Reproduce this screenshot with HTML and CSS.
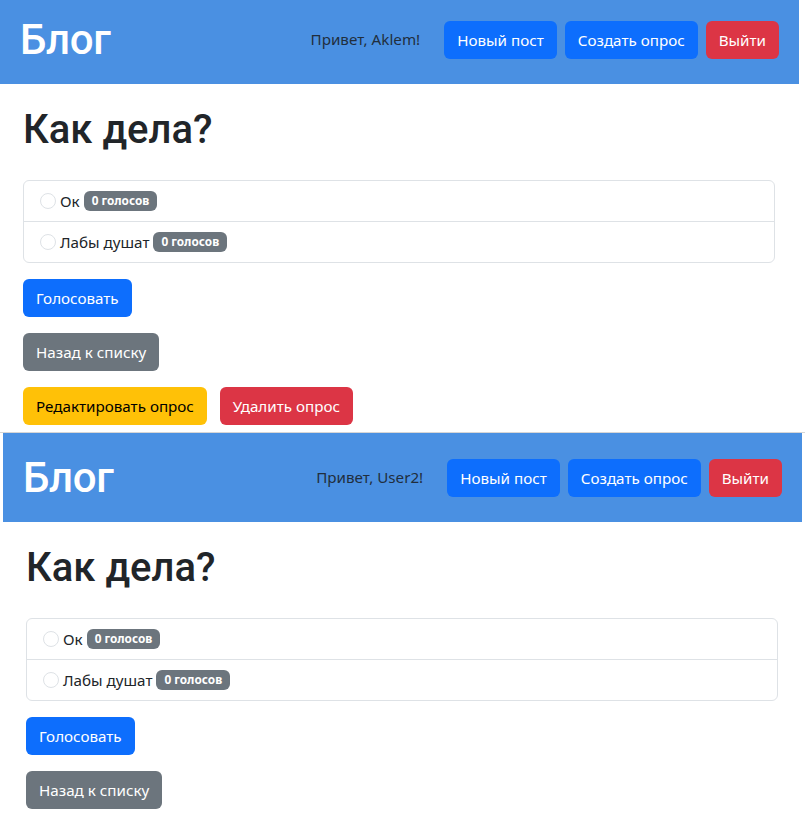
FILE: index.html
```html
<!DOCTYPE html>
<html lang="ru">
<head>
<meta charset="utf-8">
<title>Блог</title>
<link rel="stylesheet" href="styles.css">
</head>
<body>
<div class="shot shot-1">
  <div class="page">
    <header class="navbar">
      <div class="brand">Блог</div>
      <nav class="nav">
        <span class="greeting">Привет, Aklem!</span>
        <a class="btn btn-primary">Новый пост</a>
        <a class="btn btn-primary">Создать опрос</a>
        <a class="btn btn-danger">Выйти</a>
      </nav>
    </header>
    <main class="content">
      <h1 class="title">Как дела?</h1>
      <ul class="list-group">
        <li class="list-item"><span class="radio"></span><span class="label">Ок</span><span class="badge">0 голосов</span></li>
        <li class="list-item"><span class="radio"></span><span class="label">Лабы душат</span><span class="badge">0 голосов</span></li>
      </ul>
      <div class="actions">
        <div class="row"><a class="btn btn-primary">Голосовать</a></div>
        <div class="row"><a class="btn btn-secondary">Назад к списку</a></div>
        <div class="row"><a class="btn btn-warning">Редактировать опрос</a><a class="btn btn-danger">Удалить опрос</a></div>
      </div>
    </main>
  </div>
</div>
<div class="divider"></div>
<div class="shot shot-2">
  <div class="page">
    <header class="navbar">
      <div class="brand">Блог</div>
      <nav class="nav">
        <span class="greeting">Привет, User2!</span>
        <a class="btn btn-primary">Новый пост</a>
        <a class="btn btn-primary">Создать опрос</a>
        <a class="btn btn-danger">Выйти</a>
      </nav>
    </header>
    <main class="content">
      <h1 class="title">Как дела?</h1>
      <ul class="list-group">
        <li class="list-item"><span class="radio"></span><span class="label">Ок</span><span class="badge">0 голосов</span></li>
        <li class="list-item"><span class="radio"></span><span class="label">Лабы душат</span><span class="badge">0 голосов</span></li>
      </ul>
      <div class="actions">
        <div class="row"><a class="btn btn-primary">Голосовать</a></div>
        <div class="row"><a class="btn btn-secondary">Назад к списку</a></div>
      </div>
    </main>
  </div>
</div>
</body>
</html>
```
FILE: styles.css
```css
* { box-sizing: border-box; }
html, body { margin: 0; padding: 0; background: #fff; }
body {
  font-family: "Noto Sans", "Open Sans", sans-serif;
  font-size: 15.2px;
  line-height: 1.5;
  color: #212529;
  width: 805px;
  overflow: hidden;
}
.shot { overflow: hidden; }
.shot-1 { height: 432px; }
.shot-1 .page { margin-top: -5px; }
.shot-2 { height: 385px; padding-left: 3px; }
.divider { height: 1px; background: #d6d6d6; }
.page { width: 799px; }

.navbar {
  height: 89px;
  background: #4a90e2;
  padding: 0 20px;
  display: flex;
  align-items: center;
  justify-content: space-between;
}
.brand {
  color: #fff;
  font-family: Roboto, sans-serif;
  font-weight: 500;
  font-size: 42px;
  letter-spacing: -0.3px;
  line-height: 1;
}
.nav { display: flex; align-items: center; gap: 8px; }
.greeting { color: #212e3d; margin-right: 16px; }

.btn {
  display: inline-block;
  padding: 6px 12px;
  font-size: 15.2px;
  line-height: 24px;
  border-radius: 6px;
  border: 1px solid transparent;
  color: #fff;
  text-decoration: none;
  white-space: nowrap;
}
.btn-primary { background: #0d6efd; }
.btn-secondary { background: #6c757d; }
.btn-warning { background: #ffc107; color: #000; }
.btn-danger { background: #dc3545; }

.content { padding: 22px 24px 0 23px; }
.title {
  font-family: Roboto, sans-serif;
  font-weight: 500;
  font-size: 40px;
  line-height: 48px;
  margin: 0 0 26px;
  color: #212529;
}
.list-group {
  list-style: none;
  margin: 0;
  padding: 0;
  border: 1px solid #dee2e6;
  border-radius: 6px;
}
.list-item {
  display: flex;
  align-items: center;
  padding: 8px 16px;
  height: 40px;
}
.list-item + .list-item { border-top: 1px solid #dee2e6; height: 41px; }
.radio {
  width: 16px;
  height: 16px;
  border: 1px solid #dee2e6;
  border-radius: 50%;
  margin-right: 4px;
}
.label { margin-right: 4px; }
.badge {
  display: inline-block;
  background: #6c757d;
  color: #fff;
  font-size: 11.8px;
  font-weight: 700;
  line-height: 1;
  padding: 4px 8px 4px;
  border-radius: 6px;
}
.actions { padding-top: 16px; display: flex; flex-direction: column; gap: 16px; }
.row { display: flex; gap: 13px; }
```
